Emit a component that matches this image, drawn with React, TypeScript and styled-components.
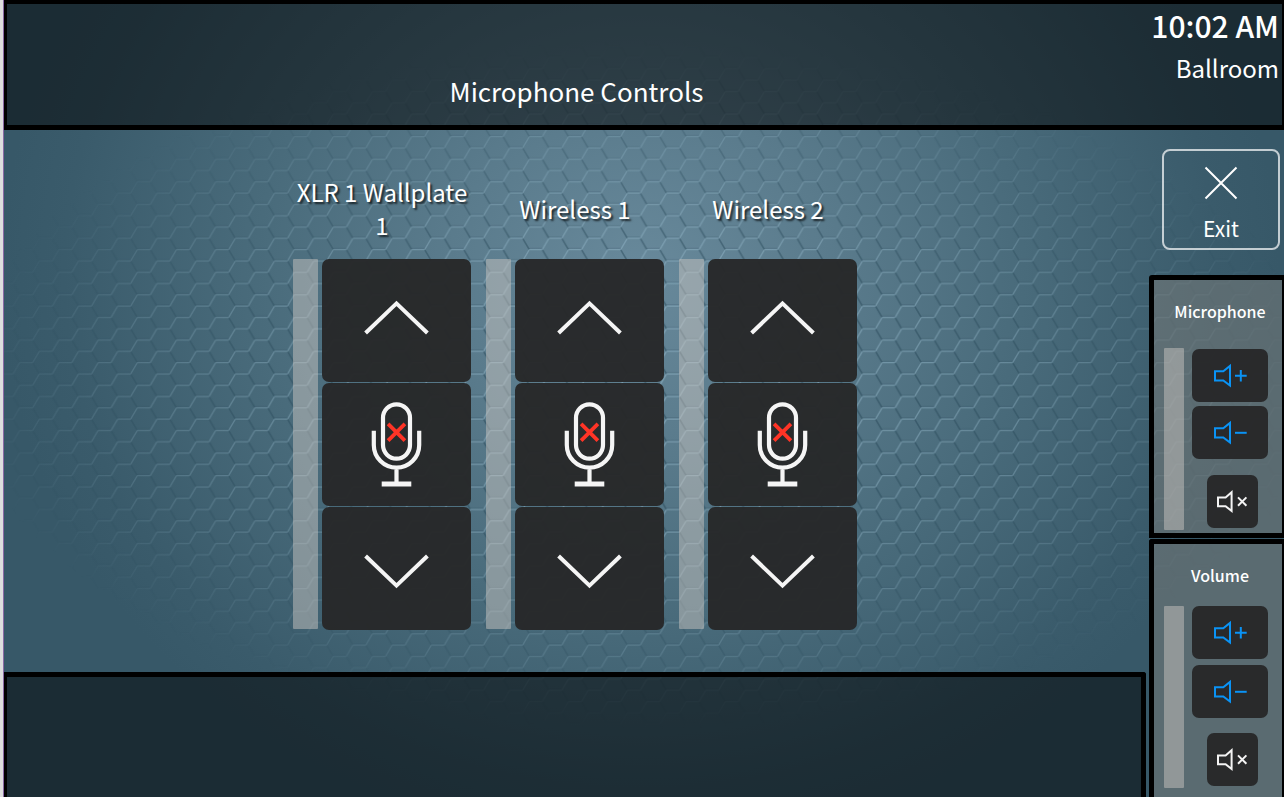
import React from "react";
import styled, { createGlobalStyle, css } from "styled-components";

const GlobalStyle = createGlobalStyle`
  *, *::before, *::after { box-sizing: border-box; }
  body {
    margin: 0;
    background: #365767;
    color: #fff;
    font-family: "Noto Sans CJK SC", "Noto Sans", sans-serif;
  }
  h1, h2, p { margin: 0; font-weight: 400; }
  button { font: inherit; color: inherit; cursor: pointer; padding: 0; border: 0; }
`;

const Page = styled.div`
  position: relative;
  isolation: isolate;
  display: grid;
  grid-template-columns: minmax(0, 1fr) 138px;
  grid-template-rows: 130px minmax(542px, 1fr) 125px;
  min-height: 100vh;
  border-left: 3px solid #dedede;
  box-shadow: inset 1px 0 #8a6aa5;
  padding-left: 1px;
`;

const Backdrop = styled.svg`
  position: absolute;
  inset: 0 0 0 1px;
  width: calc(100% - 1px);
  height: 100%;
  z-index: -1;
`;

const shade = "rgba(0, 0, 0, 0.5)";

const Header = styled.header`
  grid-column: 1 / -1;
  display: grid;
  grid-template-columns: minmax(0, 1fr) 136px;
  border: solid #000;
  border-width: 4px 2px 5px 3px;
  background: ${shade};
  background-clip: padding-box;
`;

const PageTitle = styled.h1`
  align-self: end;
  padding-bottom: 14px;
  text-align: center;
  font-size: 26px;
  line-height: 40px;
`;

const Status = styled.div`
  padding-right: 3px;
  text-align: right;
  white-space: nowrap;
`;

const Clock = styled.p`
  font-size: 30px;
  font-weight: 500;
  line-height: 42px;
`;

const Room = styled.p`
  font-size: 24px;
  line-height: 44px;
`;

const Mixer = styled.main`
  display: flex;
  justify-content: center;
  gap: 15px;
  padding: 29px 0 42px;
`;

const Channel = styled.section`
  width: 178px;
`;

const ChannelName = styled.h2`
  display: flex;
  align-items: center;
  justify-content: center;
  height: 98px;
  margin-bottom: 2px;
  text-align: center;
  font-size: 24px;
  line-height: 33px;
  text-shadow: 2px 2px 2px rgba(0, 0, 0, 0.7);
`;

const ChannelBody = styled.div`
  display: flex;
  gap: 4px;
`;

const Level = styled.div<{ $wide?: boolean }>`
  flex: none;
  width: ${(p) => (p.$wide ? 25 : 20)}px;
  height: ${(p) => (p.$wide ? 370 : 182)}px;
  border-radius: 1px;
  background: rgba(200, 195, 192, 0.5);
`;

const KeyStack = styled.div`
  display: flex;
  flex: 1;
  flex-direction: column;
  gap: 1px;
`;

const darkKey = css`
  display: flex;
  align-items: center;
  justify-content: center;
  background: rgba(39, 40, 41, 0.97);
`;

const Key = styled.button`
  ${darkKey}
  height: 123px;
  border-radius: 7px;
`;

const Footer = styled.footer`
  grid-column: 1;
  grid-row: 3;
  border: solid #000;
  border-width: 5px 5px 0 3px;
  border-top-right-radius: 3px;
  background: ${shade};
  background-clip: padding-box;
`;

const Sidebar = styled.aside`
  grid-column: 2;
  grid-row: 2 / 4;
  display: flex;
  flex-direction: column;
  gap: 1px;
  padding-left: 3px;
`;

const ExitButton = styled.button`
  display: flex;
  flex-direction: column;
  align-items: center;
  justify-content: space-between;
  height: 101px;
  margin: 19px 4px 24px 13px;
  padding: 15px 0 4px;
  border: 2px solid rgba(255, 255, 255, 0.7);
  border-radius: 8px;
  background: none;
  font-size: 21px;
  line-height: 32px;
`;

const Panel = styled.section<{ $open?: boolean }>`
  flex: ${(p) => (p.$open ? "1 0 258px" : "0 0 263px")};
  border: solid #000;
  border-width: ${(p) => (p.$open ? "5px 2px 0 5px" : "5px 2px 5px 5px")};
  border-top-left-radius: 3px;
  background: rgba(126, 126, 122, 0.5);
  background-clip: padding-box;
`;

const PanelTitle = styled.h2<{ $space: number }>`
  padding-left: 4px;
  height: ${(p) => p.$space}px;
  padding-top: 18px;
  text-align: center;
  font-size: 16px;
  font-weight: 500;
  line-height: 26px;
`;

const PanelBody = styled.div`
  display: flex;
  gap: 8px;
  padding-left: 10px;
`;

const VolumeKeys = styled.div<{ $gap: number; $top: number }>`
  display: flex;
  flex-direction: column;
  align-items: center;
  gap: ${(p) => p.$gap}px;
  width: 76px;
  padding-top: ${(p) => p.$top}px;
`;

const VolumeKey = styled.button`
  ${darkKey}
  width: 76px;
  height: 53px;
  border-radius: 7px;
  color: #0a93f5;
`;

const MuteKey = styled(VolumeKey)`
  width: 51px;
  margin: auto 0 2px 5px;
  color: #f4f4f4;
`;

const HexBackdrop = () => (
  <Backdrop viewBox="0 0 1280 797" preserveAspectRatio="xMidYMid slice" aria-hidden="true">
    <defs>
      <radialGradient id="glow" gradientUnits="userSpaceOnUse" cx="0" cy="0" r="1" gradientTransform="translate(636 275) scale(640 570)">
        <stop offset="0" stopColor="#68899b" />
        <stop offset="0.3" stopColor="#5a7b8c" />
        <stop offset="0.6" stopColor="#496b7b" />
        <stop offset="0.9" stopColor="#3a5b6b" />
        <stop offset="1" stopColor="#375868" />
      </radialGradient>
      <radialGradient id="fade" gradientUnits="userSpaceOnUse" cx="0" cy="0" r="1" gradientTransform="translate(640 385) scale(680 345)">
        <stop offset="0" stopColor="#fff" />
        <stop offset="0.45" stopColor="#fff" stopOpacity="0.8" />
        <stop offset="0.8" stopColor="#fff" stopOpacity="0.35" />
        <stop offset="1" stopColor="#fff" stopOpacity="0" />
      </radialGradient>
      <mask id="hexMask" maskUnits="userSpaceOnUse" x="0" y="0" width="1280" height="797">
        <rect width="1280" height="797" fill="url(#fade)" />
      </mask>
      <pattern id="hex" patternUnits="userSpaceOnUse" width="39.2" height="22.6" patternTransform="translate(845.4 234.3)">
        <g fill="none" strokeLinecap="round" transform="translate(0 4)">
          <g stroke="#1d3d4d" strokeOpacity="0.5" strokeWidth="1.6">
            <path d="M26.1 0L32.7 11.3M13.1 22.6L6.5 11.3M26.1 -22.6L32.7 -11.3M13.1 0L6.5 -11.3" />
          </g>
          <path stroke="#1d3d4d" strokeOpacity="0.2" strokeWidth="1" d="M13.1 -1.2H26.1M-6.5 10.1H6.5M32.7 10.1H45.7" />
          <g stroke="#92b6c8" strokeOpacity="0.6" strokeWidth="1.3">
            <path d="M6.5 11.3L13.1 0H26.1M-6.5 11.3H6.5M26.1 22.6L32.7 11.3H45.7M26.1 0L32.7 -11.3" />
          </g>
        </g>
      </pattern>
    </defs>
    <rect width="1280" height="797" fill="url(#glow)" />
    <rect width="1280" height="797" fill="url(#hex)" mask="url(#hexMask)" />
  </Backdrop>
);

const Chevron = ({ down }: { down?: boolean }) => (
  <svg width="65" height="43" viewBox="0 0 65 43" fill="none" stroke="#f5f5f5" strokeWidth="4" aria-hidden="true">
    <path d="M1.6 34L32.5 4.4L63.4 34" transform={down ? "matrix(1 0 0 -1 0 43)" : undefined} />
  </svg>
);

const MutedMic = () => (
  <svg width="51" height="87" viewBox="0 0 51 87" fill="none" stroke="#f5f5f5" strokeWidth="4.2" aria-hidden="true">
    <rect x="12" y="3.4" width="27" height="54.2" rx="13.5" />
    <path d="M2.8 29.7V43.9A22.7 22.7 0 0 0 48.2 43.9V29.7M25.5 66.6V82" />
    <path d="M10.7 83H40.3" strokeWidth="5" />
    <path d="M17.1 22.8L33.9 39.6M33.9 22.8L17.1 39.6" stroke="#ff3426" strokeWidth="3.8" />
  </svg>
);

const Speaker = ({ sign }: { sign: "plus" | "minus" }) => (
  <svg width="34" height="25" viewBox="0 0 34 25" fill="none" stroke="currentColor" strokeWidth="2" aria-hidden="true">
    <path d="M2 8.2H10.3L17 2.9V22.5L10.3 17.4H2Z" />
    <path d={sign === "plus" ? "M22 12.8H33.7M27.8 7V18.6" : "M22 12.8H33.7"} />
  </svg>
);

const SpeakerMuted = () => (
  <svg width="31" height="25" viewBox="0 0 31 25" fill="none" stroke="currentColor" strokeWidth="2" aria-hidden="true">
    <path d="M1 8.4H8.6L14.6 3.2V22L8.6 17.2H1Z" />
    <path d="M21 8.4L29.4 16.8M29.4 8.4L21 16.8" />
  </svg>
);

const channels = ["XLR 1 Wallplate 1", "Wireless 1", "Wireless 2"];

const LevelPanel = ({ name, space, gap, top = 0, open }: { name: string; space: number; gap: number; top?: number; open?: boolean }) => (
  <Panel $open={open}>
    <PanelTitle $space={space}>{name}</PanelTitle>
    <PanelBody>
      <Level role="meter" aria-label={`${name} level`} aria-valuenow={0} />
      <VolumeKeys $gap={gap} $top={top}>
        <VolumeKey aria-label={`${name} up`}><Speaker sign="plus" /></VolumeKey>
        <VolumeKey aria-label={`${name} down`}><Speaker sign="minus" /></VolumeKey>
        <MuteKey aria-label={`${name} mute`}><SpeakerMuted /></MuteKey>
      </VolumeKeys>
    </PanelBody>
  </Panel>
);

export default function App() {
  return (
    <>
      <GlobalStyle />
      <Page>
        <HexBackdrop />
        <Header>
          <PageTitle>Microphone Controls</PageTitle>
          <Status>
            <Clock>10:02 AM</Clock>
            <Room>Ballroom</Room>
          </Status>
        </Header>
        <Mixer>
          {channels.map((name) => (
            <Channel key={name}>
              <ChannelName>{name}</ChannelName>
              <ChannelBody>
                <Level $wide role="meter" aria-label={`${name} level`} aria-valuenow={0} />
                <KeyStack>
                  <Key aria-label={`${name} up`}><Chevron /></Key>
                  <Key aria-label={`${name} mute`}><MutedMic /></Key>
                  <Key aria-label={`${name} down`}><Chevron down /></Key>
                </KeyStack>
              </ChannelBody>
            </Channel>
          ))}
        </Mixer>
        <Sidebar>
          <ExitButton>
            <svg width="34" height="34" viewBox="0 0 34 34" fill="none" stroke="#fff" strokeWidth="2" aria-hidden="true">
              <path d="M1.5 1.5L32.5 32.5M32.5 1.5L1.5 32.5" />
            </svg>
            Exit
          </ExitButton>
          <LevelPanel name="Microphone" space={68} gap={4} top={1} />
          <LevelPanel name="Volume" space={62} gap={6} open />
        </Sidebar>
        <Footer />
      </Page>
    </>
  );
}
